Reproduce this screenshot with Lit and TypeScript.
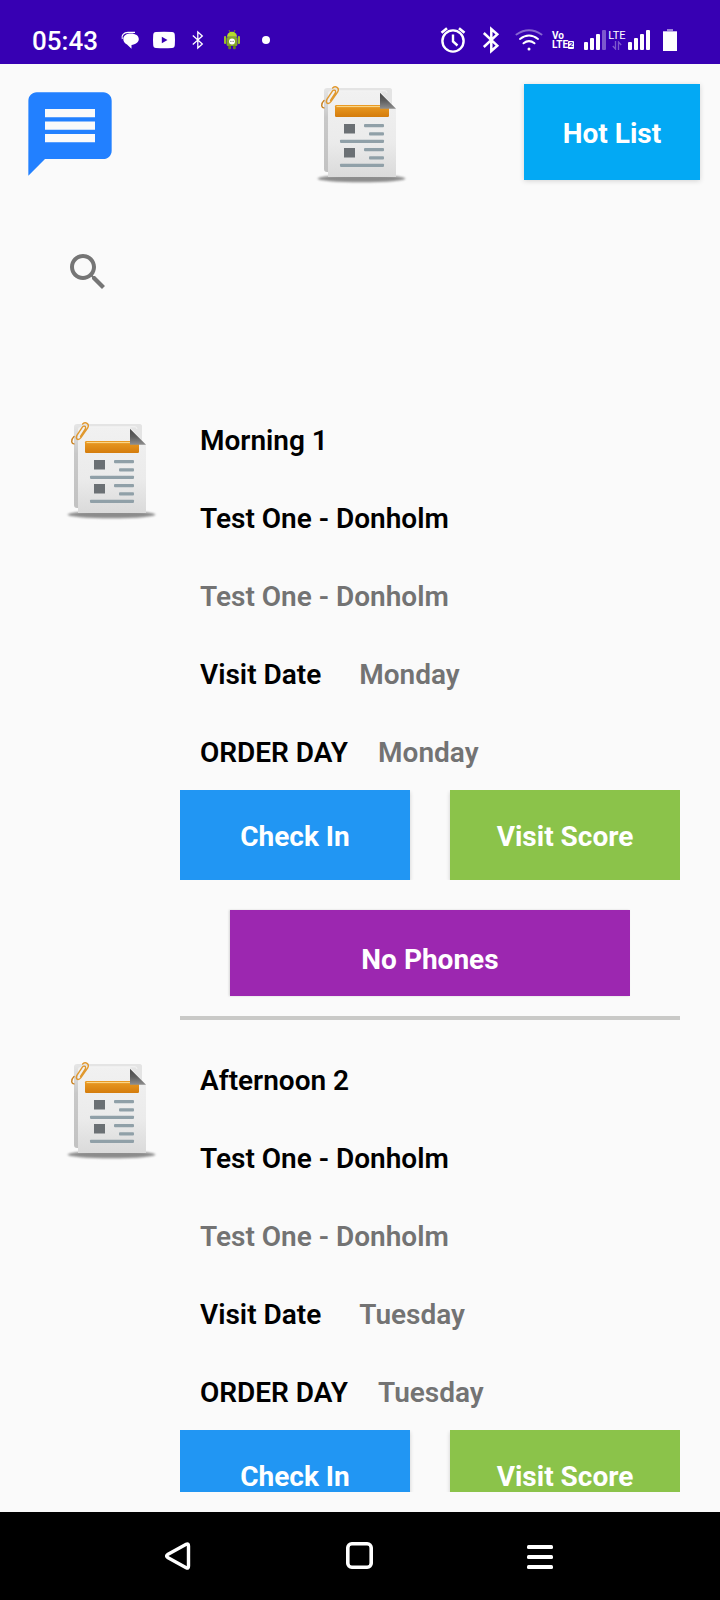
import { LitElement, html, css, svg } from "lit";
import { customElement, property } from "lit/decorators.js";

interface Visit {
  title: string;
  customer: string;
  outlet: string;
  visitDate: string;
  orderDay: string;
}

const VISITS: Visit[] = [
  { title: "Morning 1", customer: "Test One - Donholm", outlet: "Test One - Donholm", visitDate: "Monday", orderDay: "Monday" },
  { title: "Afternoon 2", customer: "Test One - Donholm", outlet: "Test One - Donholm", visitDate: "Tuesday", orderDay: "Tuesday" },
];

/* Newspaper sheet with a paper clip and a folded corner. */
@customElement("document-icon")
class DocumentIcon extends LitElement {
  static styles = css`
    :host { display: block; width: 96px; height: 96px; }
    svg { display: block; width: 100%; height: 100%; overflow: visible; }
  `;
  render() {
    const blocks = [0, 24].map(
      (dy) => svg`<g transform="translate(0 ${dy})">
        <rect x="32" y="38" width="11" height="9.500" fill="#6b7074"/>
        <rect x="52" y="38" width="20" height="3.200" rx="1" fill="#90a0a8"/>
        <rect x="57" y="46.200" width="15" height="3.200" rx="1" fill="#90a0a8"/>
        <rect x="28" y="53.700" width="44" height="3.200" rx=".8" fill="#90a0a8"/>
      </g>`
    );
    return html`<svg viewBox="0 0 96 96" aria-hidden="true">
      <defs>
        <linearGradient id="sheet" x1="0" y1="0" x2="0" y2="1">
          <stop offset="0" stop-color="#f1f1f1"/><stop offset=".6" stop-color="#ebebeb"/><stop offset="1" stop-color="#dadada"/>
        </linearGradient>
        <linearGradient id="back" x1="0" y1="0" x2="0" y2="1">
          <stop offset="0" stop-color="#e6e6e6"/><stop offset=".35" stop-color="#c8c8c8"/><stop offset="1" stop-color="#c2c2c2"/>
        </linearGradient>
        <linearGradient id="band" x1="0" y1="0" x2="0" y2="1">
          <stop offset="0" stop-color="#eb9c24"/><stop offset="1" stop-color="#d47c0c"/>
        </linearGradient>
        <linearGradient id="fold" x1="0" y1="0" x2="0" y2="1">
          <stop offset="0" stop-color="#484848"/><stop offset=".5" stop-color="#5e5e5e"/><stop offset="1" stop-color="#8e8e8e"/>
        </linearGradient>
        <filter id="soft" x="-10%" y="-50%" width="120%" height="200%"><feGaussianBlur stdDeviation=".9"/></filter>
      </defs>
      <ellipse cx="49.500" cy="92.600" rx="44" ry="3.600" fill="#8c8c8c" filter="url(#soft)"/>
      <path d="M15 2H77Q80 2 80 5V86H15Q12 86 12 83V5Q12 2 15 2Z" fill="url(#back)"/>
      <path d="M15 2H77Q80 2 80 5V22H16V6Q14 2 15 2Z" fill="#e4e4e4"/>
      <path d="M19 5H68L84 22.700V91H16V8Q16 5 19 5Z" fill="url(#sheet)"/>
      <path d="M19 4.800H73Q75 4.800 75 7" fill="none" stroke="#f4f4f4" stroke-width="1"/>
      <rect x="23" y="19" width="54" height="12" rx="1.200" fill="url(#band)"/>
      <path d="M24.500 20.600H68" stroke="#fbdc92" stroke-width="1"/>
      <path d="M68 6.700V22.700H84Z" fill="url(#fold)"/>
      ${blocks}
      <g fill="none" stroke="#e0982e" stroke-width="1.400" stroke-linecap="round">
        <path d="M18.500 14.500L23.200 7.200Q24.300 4.800 22.600 4.200Q21.300 3.900 20.200 5.300L14.900 13.300Q13.500 16.300 15.300 17.300Q17.300 17.900 18.900 15.600L25.700 6Q27.300 2.800 25 1.300Q22.800 .1 20.600 2"/>
        <path d="M12 14.500Q9.600 16.800 9.700 19.500Q10 21.900 12 21.900" stroke="#c98222"/>
      </g>
    </svg>`;
  }
}

/* One planned visit: icon column, details and actions. */
@customElement("visit-item")
class VisitItem extends LitElement {
  @property({ attribute: false }) visit!: Visit;

  static styles = css`
    :host { display: block; }
    .item { display: grid; grid-template-columns: 140px minmax(0, 1fr); padding-top: 20px; }
    .thumb { display: flex; justify-content: center; align-items: flex-start; padding-top: 22px; }
    .text { margin: 0; padding-left: 20px; }
    .line {
      display: flex; align-items: center; box-sizing: border-box; height: 78px; margin: 0; padding-top: 4px;
      font-size: 28px; line-height: 36px; font-weight: 600; color: #000;
      white-space: nowrap;
    }
    .muted { color: #737373; }
    .value { margin: 0; color: #737373; }
    .visit { gap: 38px; }
    .order { gap: 30px; }
    .actions { display: grid; grid-template-columns: 1fr 1fr; gap: 40px; overflow: hidden; }
    .button {
      border: 0; border-radius: 0; margin: 0; padding: 4px 0 0; height: 90px;
      font: 700 28px/36px Roboto, sans-serif; color: #fff; cursor: pointer;
      box-shadow: 0 2px 4px rgba(0, 0, 0, 0.18);
    }
    .check { background: #2196f3; }
    .score { background: #8bc34a; }
    .extra { display: flex; padding: 30px 50px 0; }
    .phones { flex: 1; height: 86px; padding-top: 14px; background: #9c27b0; box-shadow: -1px 0 2px rgba(0, 0, 0, 0.15); }
    .rule { border: 0; height: 4px; margin: 20px 0 0; background: #c9c9c7; }
  `;

  render() {
    const v = this.visit;
    return html`<article class="item">
      <div class="thumb"><document-icon></document-icon></div>
      <div>
        <div class="text">
          <h2 class="line">${v.title}</h2>
          <p class="line">${v.customer}</p>
          <p class="line muted">${v.outlet}</p>
          <dl class="line visit"><dt>Visit Date</dt><dd class="value">${v.visitDate}</dd></dl>
          <dl class="line order"><dt>ORDER DAY</dt><dd class="value">${v.orderDay}</dd></dl>
        </div>
        <div class="actions">
          <button class="button check" type="button">Check In</button>
          <button class="button score" type="button">Visit Score</button>
        </div>
        <div class="extra"><button class="button phones" type="button">No Phones</button></div>
        <hr class="rule" />
      </div>
    </article>`;
  }
}

/* System status bar. */
@customElement("status-bar")
class StatusBar extends LitElement {
  static styles = css`
    :host { display: block; }
    .bar {
      display: flex; justify-content: space-between; align-items: center;
      height: 64px; box-sizing: border-box; padding: 16px 40px 0 32px;
      background: #3700b3; color: #fff; font-family: Roboto, sans-serif;
    }
    .group { display: flex; align-items: center; }
    .left { gap: 10px; }
    .right { gap: 8px; }
    .time { width: 76px; padding-top: 2px; font-size: 26px; line-height: 32px; font-weight: 500; }
    svg { display: block; flex: none; }
    .volte { display: grid; width: 22px; font-size: 10px; line-height: 9px; font-weight: 700; }
    .second { display: flex; align-items: center; }
    .sim { background: #fff; color: #3700b3; width: 6px; height: 8px; font-size: 8px; line-height: 8px; text-align: center; border-radius: 1px; }
    .signal { display: flex; align-items: flex-end; gap: 1px; padding-left: 2px; }
    .net { display: grid; justify-items: center; width: 20px; height: 20px; font-size: 11px; line-height: 11px; }
  `;
  render() {
    return html`<div class="bar">
      <div class="group left">
        <span class="time">05:43</span>
        <svg width="24" height="24" viewBox="0 0 24 24" fill="#fff">
          <path d="M13 5.400C17.500 5.400 20.800 7.600 20.800 11S17.500 16.600 13.500 17V20.800L9 16.500C6.700 15.500 5.300 13.500 5.300 11C5.300 7.300 8.500 5.400 13 5.400Z"/>
          <path d="M4.300 11C2.800 7.500 6 4.400 10 4.300H17" fill="none" stroke="#fff" stroke-width="1.200"/>
        </svg>
        <svg width="24" height="24" viewBox="0 0 24 24">
          <path d="M4 4Q12 3.500 20 4Q22.700 4.200 22.800 7Q23.200 12 22.800 17Q22.700 19.800 20 20Q12 20.500 4 20Q1.300 19.800 1.200 17Q.8 12 1.200 7Q1.300 4.200 4 4Z" fill="#fff"/>
          <path d="M9.800 8.700L15.500 12L9.800 15.300Z" fill="#3700b3"/>
        </svg>
        <svg width="24" height="24" viewBox="0 0 24 24" fill="none" stroke="#fff" stroke-width="1.300">
          <path d="M6.800 7.500L16.300 16L11.800 20V4L16.300 8L6.800 16.500"/>
        </svg>
        <svg width="24" height="24" viewBox="0 0 24 24" fill="#9bbd2a">
          <path d="M9 2L10.500 5M15 2L13.500 5" stroke="#6d8a22" stroke-width="1"/>
          <path d="M7 8.800A5 5 0 0 1 17 8.800Z" fill="#b4dc2c"/>
          <rect x="6.600" y="9" width="10.800" height="9" rx="1.500" fill="#86a82a"/>
          <rect x="4" y="8" width="2.200" height="8" rx="1"/><rect x="17.800" y="8" width="2.200" height="8" rx="1"/>
          <rect x="8.200" y="17.500" width="2.800" height="3.700" rx="1" fill="#66801e"/><rect x="13" y="17.500" width="2.800" height="3.700" rx="1" fill="#66801e"/>
          <circle cx="12" cy="13.500" r="3" fill="#fff"/><circle cx="10.900" cy="13.300" r=".6" fill="#555"/><circle cx="13.100" cy="13.300" r=".6" fill="#555"/>
        </svg>
        <svg width="24" height="24" viewBox="0 0 24 24"><circle cx="12" cy="12" r="4" fill="#fff"/></svg>
      </div>
      <div class="group right">
        <svg width="30" height="30" viewBox="0 0 30 30" fill="none" stroke="#fff" stroke-width="2.400">
          <circle cx="15" cy="16" r="10.600"/><path d="M15 9.500V16.500L19.500 20.500"/><path d="M3.500 7.800L9 3.200M26.500 7.800L21 3.200" stroke-width="2.600"/>
        </svg>
        <svg width="30" height="30" viewBox="0 0 30 30" fill="none" stroke="#fff" stroke-width="2.500">
          <path d="M7.800 8L21.300 20.700L15.300 26V4L21.300 9.300L7.800 22"/>
        </svg>
        <svg width="30" height="30" viewBox="0 0 30 30" fill="none" stroke="#fff" stroke-width="2" stroke-linecap="round">
          <path d="M2.500 9.500Q15 1 27.500 9.500" opacity=".4"/>
          <path d="M6 14Q15 7 24 14"/><path d="M9.500 18.300Q15 14 20.500 18.300"/>
          <circle cx="15" cy="24" r="1.500" fill="#fff" stroke="none"/>
        </svg>
        <span class="volte"><span>Vo</span><span class="second">LTE<span class="sim">2</span></span></span>
        <span class="signal">
          <svg width="22" height="20" viewBox="0 0 22 20" fill="#fff">
            <rect y="12" width="4" height="8" rx="1"/><rect x="6" y="8" width="4" height="12" rx="1"/><rect x="12" y="4" width="4" height="16" rx="1"/><rect x="18" width="4" height="20" rx="1" opacity=".35"/>
          </svg>
          <span class="net">LTE
            <svg width="10" height="9" viewBox="0 0 10 9" fill="none" stroke="#fff" stroke-width="1.300" opacity=".35"><path d="M3.500 0V8L.8 5M6.500 9V1L9.200 4"/></svg>
          </span>
          <svg width="22" height="20" viewBox="0 0 22 20" fill="#fff">
            <rect y="12" width="4" height="8" rx="1"/><rect x="6" y="8" width="4" height="12" rx="1"/><rect x="12" y="4" width="4" height="16" rx="1"/><rect x="18" width="4" height="20" rx="1"/>
          </svg>
        </span>
        <svg width="22" height="24" viewBox="0 0 22 24" fill="#fff">
          <rect x="9" y="1" width="6" height="2" opacity=".5"/><rect x="5" y="3" width="14" height="2" opacity=".7"/><rect x="5" y="4" width="14" height="19"/>
        </svg>
      </div>
    </div>`;
  }
}

@customElement("app-root")
class AppRoot extends LitElement {
  static styles = css`
    :host {
      display: flex; flex-direction: column; height: 100vh; overflow: hidden;
      background: #fafafa; font-family: Roboto, sans-serif;
    }
    button { font-family: inherit; cursor: pointer; }
    svg { display: block; }
    .header { display: grid; grid-template-columns: 1fr auto 1fr; align-items: center; padding: 20px; }
    .icon-button { display: block; padding: 0; border: 0; background: none; }
    .chat { justify-self: start; }
    .hot {
      justify-self: end; align-self: start; width: 176px; height: 96px; padding: 4px 0 0;
      border: 0; background: #03a9f4; color: #fff;
      font-size: 28px; line-height: 36px; font-weight: 700;
      box-shadow: 0 1px 5px rgba(0, 0, 0, 0.16);
    }
    .search { padding: 44px 64px 84px; }
    .list { flex: 1; min-height: 0; overflow-y: auto; scrollbar-width: none; margin: 0 40px 20px; }
    .nav { display: flex; flex: none; height: 88px; padding: 0 88px; background: #000; }
    .nav-button { flex: 1; display: flex; align-items: center; justify-content: center; padding: 0; border: 0; background: none; }
  `;
  render() {
    return html`
      <status-bar></status-bar>
      <header class="header">
        <button class="icon-button chat" type="button" aria-label="Messages">
          <svg width="100" height="100" viewBox="0 0 24 24" fill="#2280ff">
            <path d="M20 2H4C2.900 2 2.010 2.900 2.010 4L2 22L6 18H20C21.100 18 22 17.100 22 16V4C22 2.900 21.100 2 20 2ZM18 14H6V12H18ZM18 11H6V9H18ZM18 8H6V6H18Z"/>
          </svg>
        </button>
        <document-icon></document-icon>
        <button class="hot" type="button">Hot List</button>
      </header>
      <div class="search">
        <button class="icon-button" type="button" aria-label="Search">
          <svg width="48" height="48" viewBox="0 0 24 24" fill="#757575">
            <path d="M15.500 14h-.79l-.28-.27C15.410 12.590 16 11.110 16 9.500 16 5.910 13.090 3 9.500 3S3 5.910 3 9.500 5.910 16 9.500 16c1.610 0 3.090-.59 4.230-1.570l.27.28v.79l5 4.990L20.490 19l-4.990-5zm-6 0C7.010 14 5 11.990 5 9.500S7.010 5 9.500 5 14 7.010 14 9.500 11.990 14 9.500 14z"/>
          </svg>
        </button>
      </div>
      <main class="list">${VISITS.map((v) => html`<visit-item .visit=${v}></visit-item>`)}</main>
      <nav class="nav" aria-label="System">
        <button class="nav-button" type="button" aria-label="Back">
          <svg width="28" height="28" viewBox="0 0 28 28" fill="none" stroke="#fff" stroke-width="3.400" stroke-linejoin="round"><path d="M21.200 2.200Q23.500 1 23.500 4V24Q23.500 27 21.200 25.800L2.600 15.500Q.6 14 2.600 12.500Z"/></svg>
        </button>
        <button class="nav-button" type="button" aria-label="Home">
          <svg width="28" height="28" viewBox="0 0 28 28" fill="none" stroke="#fff" stroke-width="3.600"><rect x="1.800" y="1.800" width="23.400" height="23.400" rx="4"/></svg>
        </button>
        <button class="nav-button" type="button" aria-label="Recent apps">
          <svg width="28" height="28" viewBox="0 0 28 28" fill="#fff"><rect y="3" width="26" height="4" rx="1.500"/><rect y="13" width="26" height="4" rx="1.500"/><rect y="23" width="26" height="4" rx="1.500"/></svg>
        </button>
      </nav>
    `;
  }
}
